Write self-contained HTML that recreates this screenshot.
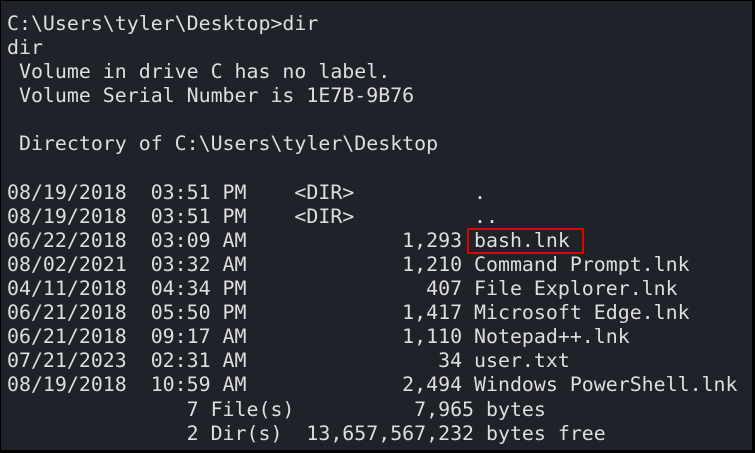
<!DOCTYPE html>
<html><head><style>
html,body{margin:0;padding:0;}
body{width:755px;height:453px;overflow:hidden;background:#000;}
.t{position:absolute;left:1px;top:1px;width:751px;height:449px;background:#1f2229;}
pre{position:absolute;left:6px;top:11px;margin:0;font-family:"DejaVu Sans Mono","Liberation Mono",monospace;font-size:19.9px;line-height:24.1px;color:#dedede;}
.box{position:absolute;left:466px;top:227px;width:113px;height:22px;border:2px solid #e00000;}
</style></head><body>
<div class="t">
<pre>C:\Users\tyler\Desktop&gt;dir
dir
 Volume in drive C has no label.
 Volume Serial Number is 1E7B-9B76

 Directory of C:\Users\tyler\Desktop

08/19/2018  03:51 PM    &lt;DIR&gt;          .
08/19/2018  03:51 PM    &lt;DIR&gt;          ..
06/22/2018  03:09 AM             1,293 bash.lnk
08/02/2021  03:32 AM             1,210 Command Prompt.lnk
04/11/2018  04:34 PM               407 File Explorer.lnk
06/21/2018  05:50 PM             1,417 Microsoft Edge.lnk
06/21/2018  09:17 AM             1,110 Notepad++.lnk
07/21/2023  02:31 AM                34 user.txt
08/19/2018  10:59 AM             2,494 Windows PowerShell.lnk
               7 File(s)          7,965 bytes
               2 Dir(s)  13,657,567,232 bytes free</pre>
<div class="box"></div>
</div>
</body></html>
